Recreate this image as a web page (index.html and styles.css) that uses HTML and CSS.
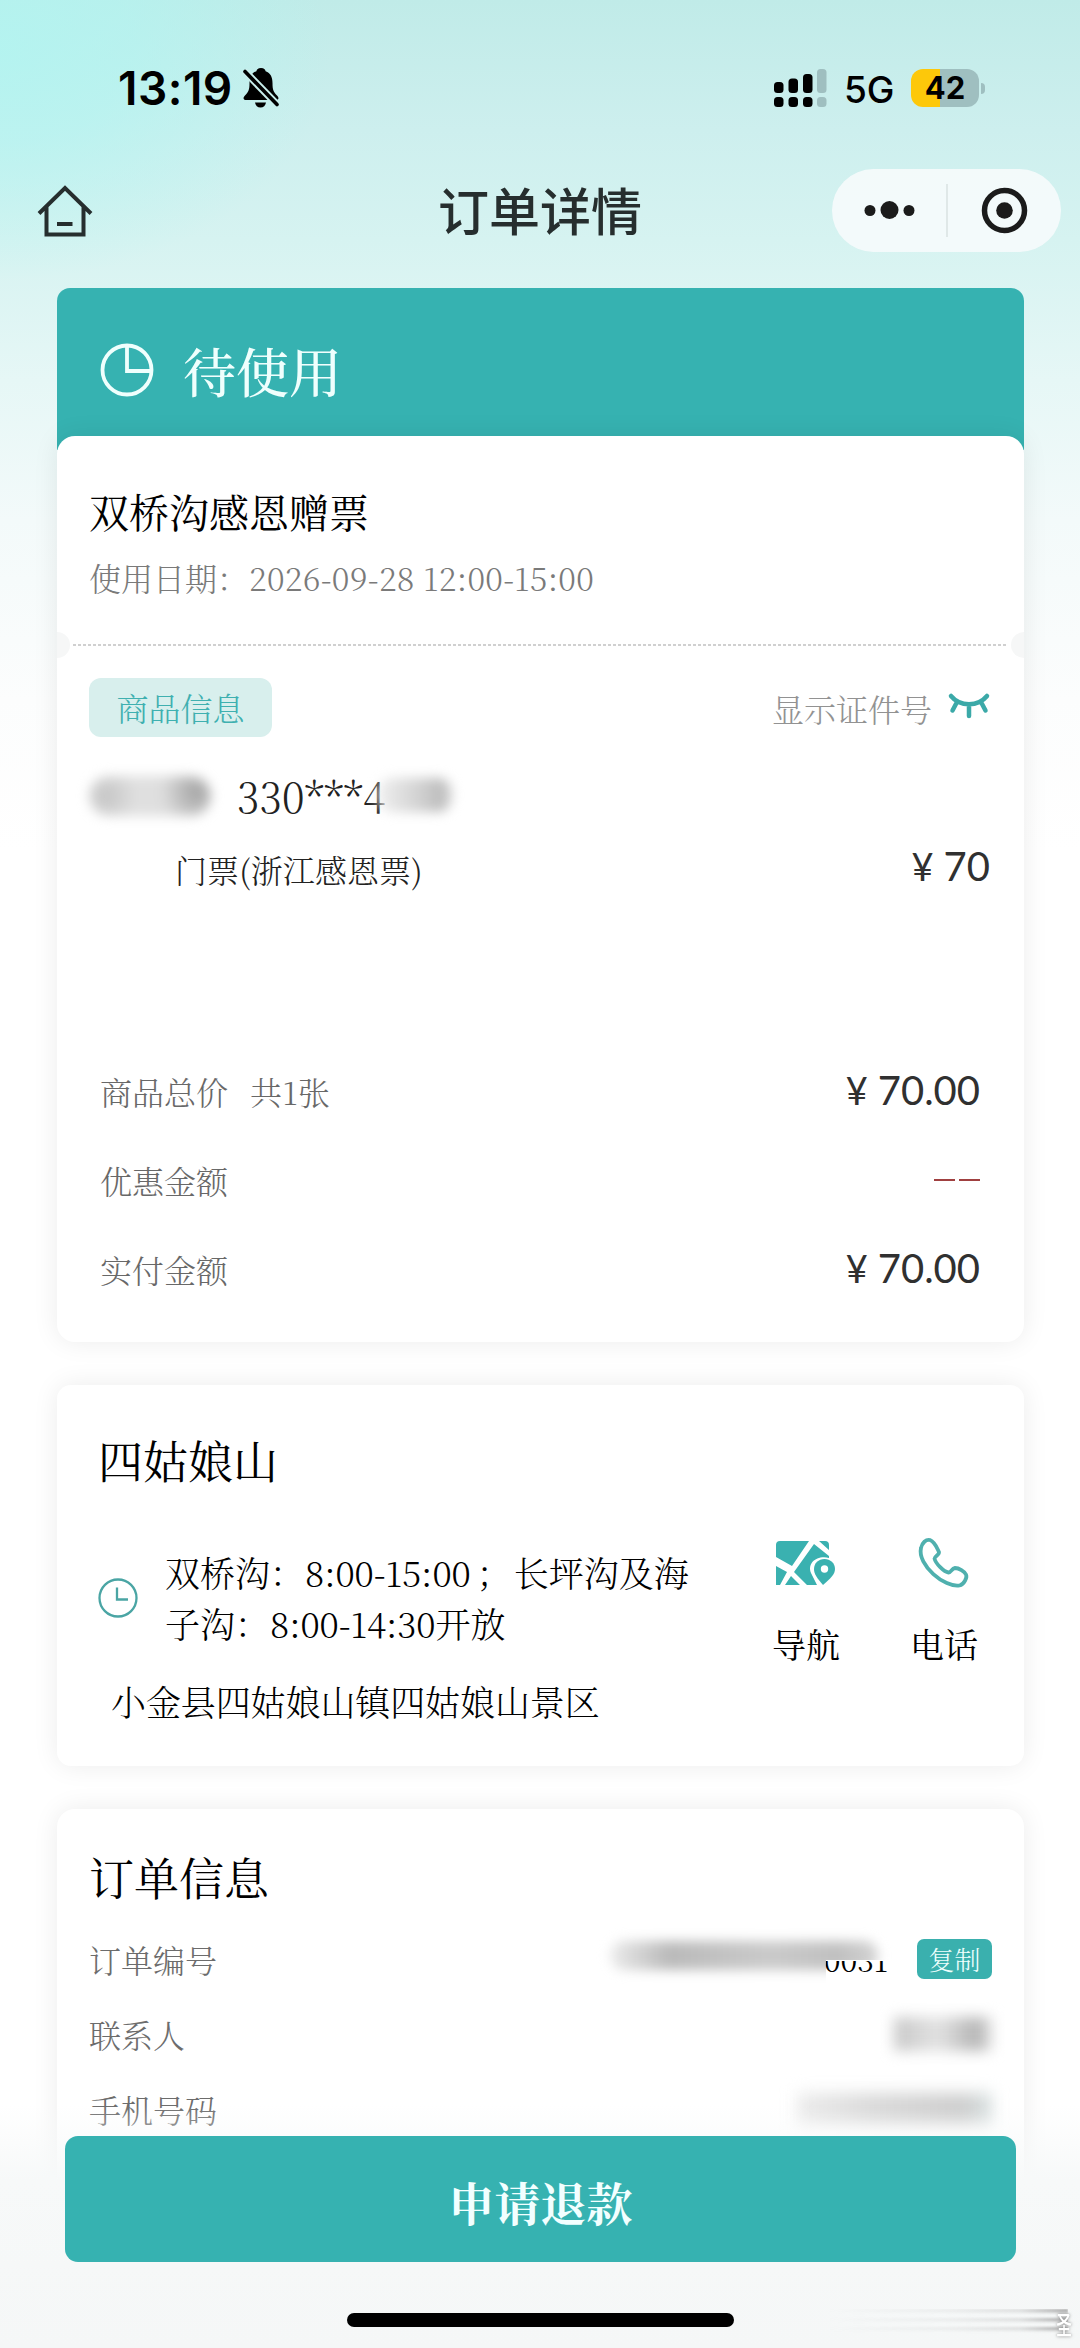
FILE: index.html
```html
<!DOCTYPE html>
<html lang="zh-CN">
<head>
<meta charset="utf-8">
<title>订单详情</title>
<link rel="stylesheet" href="styles.css">
</head>
<body>
<div class="page">
  <header class="status">
    <div class="status-left">
      <span class="time">13:19</span>
      <svg class="bell" width="36" height="40" viewBox="0 0 36 40">
        <path d="M18 0c-3 0-4.300 1.500-4.600 3.200C8.500 5 6.500 9 6.500 15c0 7-1 9-4.500 12.500-2.500 2.500-1.500 4.500 1 4.500h30c2.500 0 3.500-2 1-4.500C30.500 24 29.500 22 29.500 15c0-6-2-10-6.900-11.800C22.300 1.500 21 0 18 0zM12 34.500h11c-.5 3-2.500 5-5.500 5s-5-2-5.500-5z" fill="#000"/>
        <path d="M1 2.500L35 37.500" stroke="#c8eeec" stroke-width="7.500"/>
        <path d="M2 3.500L34 36.500" stroke="#000" stroke-width="3.600" stroke-linecap="round"/>
      </svg>
    </div>
    <div class="status-right">
      <svg class="signal" width="53" height="39" viewBox="0 0 53 39">
        <g fill="#000"><rect x="0" y="13" width="9.500" height="11" rx="3.500"/><rect x="14.500" y="9.500" width="9.500" height="14.500" rx="3.500"/><rect x="29" y="5" width="9.500" height="19" rx="3.500"/><rect x="0" y="28" width="9.500" height="10" rx="3.500"/><rect x="14.500" y="28" width="9.500" height="10" rx="3.500"/><rect x="29" y="28" width="9.500" height="10" rx="3.500"/></g>
        <g fill="#9fbfc0"><rect x="43" y="0" width="9.500" height="24" rx="3.500"/><rect x="43" y="28" width="9.500" height="10" rx="3.500"/></g>
      </svg>
      <span class="net">5G</span>
      <span class="battery">42</span><span class="battery-tip"></span>
    </div>
  </header>

  <nav class="nav">
    <svg class="home" width="56" height="56" viewBox="0 0 56 56" fill="none" stroke="#262e2e" stroke-width="4">
      <path d="M2 29.500L28 4l26 25.500M9.500 23v27.500h37V23M20 40h15.500"/>
    </svg>
    <h1 class="nav-title">订单详情</h1>
    <div class="capsule">
      <svg width="229" height="83" viewBox="0 0 229 83">
        <g fill="#1b1b1b"><circle cx="38" cy="41.500" r="5.500"/><circle cx="57.500" cy="41" r="9"/><circle cx="77" cy="41.500" r="5.500"/><circle cx="172.500" cy="41.500" r="8.300"/></g>
        <path d="M115 15v53" stroke="#d3dcdc" stroke-width="1.200"/>
        <circle cx="172.500" cy="41.500" r="20" fill="none" stroke="#1b1b1b" stroke-width="5.500"/>
      </svg>
    </div>
  </nav>

  <main class="content">
    <section class="order">
      <div class="state">
        <svg width="54" height="54" viewBox="0 0 54 54" fill="none" stroke="#effffd" stroke-width="3.800"><circle cx="27" cy="27" r="24.500"/><path d="M27 3v25h24"/></svg>
        <span>待使用</span>
      </div>
      <div class="card order-card">
        <div class="order-head">
          <h2 class="ticket-name">双桥沟感恩赠票</h2>
          <p class="use-date">使用日期：<span class="date-digits">2026-09-28 12:00-15:00</span></p>
        </div>
        <div class="tear"></div>
        <div class="goods">
          <div class="goods-top">
            <span class="tag">商品信息</span>
            <span class="show-id"><span>显示证件号</span>
              <svg width="42" height="28" viewBox="0 0 42 28" fill="none" stroke="#3ba9a8" stroke-width="4.500" stroke-linecap="round"><path d="M3 3c9 11 27 11 36 0M9 9L4.500 17.500M21 12v11M33 9l4.500 8.500"/></svg>
            </span>
          </div>
          <div class="person">
            <span class="smudge smudge-name"></span>
            <span class="id-no">330<span class="stars">***</span>4</span>
            <span class="smudge smudge-id"></span>
          </div>
          <div class="item"><span>门票(浙江感恩票)</span><span class="price"><i>¥</i>70</span></div>
          <div class="sums">
            <div class="sum"><span>商品总价<span class="count">共1张</span></span><span class="price"><i>¥</i>70.00</span></div>
            <div class="sum"><span>优惠金额</span><span class="none"><b></b><b></b></span></div>
            <div class="sum"><span>实付金额</span><span class="price"><i>¥</i>70.00</span></div>
          </div>
        </div>
      </div>
    </section>

    <section class="card place">
      <h2 class="heading">四姑娘山</h2>
      <div class="place-body">
        <div class="place-info">
          <div class="hours">
            <svg width="42" height="42" viewBox="0 0 42 42" fill="none" stroke="#4aa5a4" stroke-width="2.300"><circle cx="21" cy="21" r="18.500"/><path d="M20 10.500v12h11"/></svg>
            <p>双桥沟：<span class="hd">8:00-15:00</span><span class="semi">；</span>长坪沟及海<br>子沟：<span class="hd">8:00-14:30</span>开放</p>
          </div>
          <p class="address">小金县四姑娘山镇四姑娘山景区</p>
        </div>
        <div class="actions">
          <div class="action">
            <svg width="60" height="48" viewBox="0 0 60 48">
              <path d="M4 2h29L16 27 0 18V6q0-4 4-4zM0 27l11 6L4 46H0zM18 33L38 5l15 12v2c-12-3-22 5-18 15l6 12H31zM15 37l9 9H9zM43 2h6q4 0 4 4v5z" fill="#3ab1b0"/>
              <path d="M48.500 20c-6 0-10.500 4.300-10.500 10 0 5 3 9 9 16 8-7 12-11 12-16 0-5.700-4.700-10-10.500-10z" fill="#3ab1b0"/><circle cx="48.500" cy="30" r="3.700" fill="#fff"/>
            </svg>
            <span>导航</span>
          </div>
          <div class="action">
            <svg width="50" height="50" viewBox="0 0 50 50" fill="none" stroke="#4fb0ae" stroke-width="3.800" stroke-linejoin="round">
              <path d="M2 10C3 5 7 1 11 2c5 2 7 8 9 12 .500 3-4.500 4-4.500 6.500 1 5 9.500 13.500 14 14 3 0 3-4 6.500-4.500 4 0 9.500 3.500 11 6.500 1.500 3-2 10-6.500 11C26 50-2 27 2 10z"/>
            </svg>
            <span>电话</span>
          </div>
        </div>
      </div>
    </section>

    <section class="card info">
      <h2 class="heading">订单信息</h2>
      <div class="row"><span>订单编号</span>
        <span class="order-no"><span class="digits">0031</span><span class="smudge-cover"></span><span class="smudge smudge-no"></span></span>
        <span class="copy">复制</span>
      </div>
      <div class="row"><span>联系人</span><span class="smudge smudge-contact"></span></div>
      <div class="row"><span>手机号码</span><span class="smudge smudge-phone"></span></div>
    </section>
  </main>

  <footer class="bottom">
    <div class="refund">申请退款</div>
    <div class="indicator"></div>
    <span class="streaks"></span>
    <span class="mark">圣</span>
  </footer>
</div>
</body>
</html>
```
FILE: styles.css
```css
* { box-sizing: border-box; margin: 0; padding: 0; }
body { width: 1080px; height: 2348px; overflow: hidden; }
svg { display: block; flex: none; overflow: visible; }
i { font-style: normal; }
h1, h2 { font-weight: 400; }

.page {
  position: relative;
  width: 1080px;
  height: 2348px;
  overflow: hidden;
  font-family: "Noto Serif CJK SC", "Noto Serif SC", "Noto Sans CJK SC", serif;
  font-weight: 300;
  line-height: 50px;
  color: #111;
  background:
    radial-gradient(ellipse 330px 230px at 0 50px, rgba(176, 245, 241, .8) 0, rgba(176, 245, 241, .6) 40%, rgba(176, 245, 241, 0) 100%),
    linear-gradient(180deg, #c0ebe8 0, #cdefee 130px, #d6f3f1 240px, #e6f7f6 380px, #f3fafa 520px, #fcfdfd 700px, #fff 850px);
}

/* status bar */
.status { height: 150px; padding: 0 95px 0 118px; display: flex; justify-content: space-between; }
.status-left, .status-right { display: flex; align-items: center; height: 176px; }
.time { font: 600 46px/60px Inter, sans-serif; letter-spacing: .5px; color: #000; width: 125px; white-space: nowrap; }
.signal { margin-right: 18px; }
.net { margin-left: -1px; font: 500 37px/50px Inter, sans-serif; color: #000; width: 67px; position: relative; top: 2px; }
.battery {
  width: 68px; height: 38px; border-radius: 12px;
  background: linear-gradient(90deg, #fdc80a 43%, #9fbfc0 43%);
  font: 700 31px/38px Inter, sans-serif; color: #000; text-align: center;
}
.battery-tip { width: 4px; height: 11px; margin-left: 2px; border-radius: 0 4px 4px 0; background: #9fbfc0; }

/* title bar */
.nav { height: 138px; padding: 19px 19px 0 37px; display: grid; grid-template-columns: 229px 1fr 229px; align-items: start; }
.home { margin-top: 15px; }
.nav-title { padding-right: 18px; text-align: center; font: 500 51px/80px "Noto Sans CJK SC", sans-serif; color: #262e2e; }
.capsule { width: 229px; height: 83px; border-radius: 42px; background: rgba(247, 251, 252, .88); }

/* cards */
.content { padding: 0 56px 0 57px; display: flex; flex-direction: column; gap: 43px; }
.card { background: #fff; border-radius: 14px; box-shadow: 0 0 26px rgba(0, 0, 0, .08); }
.heading { font-size: 45px; line-height: 60px; color: #000; }

.order { border-radius: 13px; background: linear-gradient(#36b2b1, #36b2b1) no-repeat 0 0 / 100% 162px; }
.state { height: 148px; padding: 15px 0 0 43px; display: flex; align-items: center; gap: 29px; font-size: 53px; line-height: 60px; color: #effffd; font-weight: 500; }
.order-card { height: 906px; border-radius: 18px; }
.order-head { height: 208px; padding: 45px 33px 0 32px; }
.ticket-name { font-size: 40px; line-height: 60px; color: #000; }
.use-date { margin-top: 16px; font-size: 32px; line-height: 40px; color: #7a7a7a; white-space: nowrap; }
.date-digits { letter-spacing: .3px; }
.tear {
  height: 2px; margin: 0 16px; position: relative;
  background: repeating-linear-gradient(90deg, #d0d0d0 0 3px, transparent 3px 5px);
}
.tear::before, .tear::after { content: ""; position: absolute; top: -12px; width: 13px; height: 26px; background: #f6f7f7; }
.tear::before { left: -16px; border-radius: 0 13px 13px 0; }
.tear::after { right: -16px; border-radius: 13px 0 0 13px; }

.goods { padding: 32px 34px 0 32px; }
.goods-top { display: flex; justify-content: space-between; height: 59px; }
.tag { width: 183px; border-radius: 12px; background: #d8efed; color: #3fb0b0; font-size: 32px; line-height: 59px; text-align: center; }
.show-id { display: flex; align-items: center; gap: 16px; font-size: 32px; color: #929292; }
.show-id svg { margin-top: -2px; }
.person { height: 60px; margin-top: 29px; display: flex; align-items: center; }
.id-no { margin-left: 26px; font-size: 41px; line-height: 60px; color: #222; white-space: nowrap; }
.smudge { display: block; flex: none; filter: blur(6px); }
.smudge-name { width: 122px; height: 40px; background: radial-gradient(circle at 88% 40%, #a4a4a4 0, transparent 32%), radial-gradient(circle at 14% 50%, #c4c4c4 0, transparent 30%), linear-gradient(90deg, #e4e4e4, #dadada); border-radius: 20px; }
.smudge-id { width: 74px; height: 34px; margin: -2px 0 0 -8px; border-radius: 14px; background: linear-gradient(90deg, #f0f0f0, #cfcfcf 60%, #bcbcbc 85%, #d8d8d8); }
.item { margin-top: 18px; padding-left: 86px; height: 50px; display: flex; justify-content: space-between; align-items: center; font-size: 32px; line-height: 46px; color: #222; letter-spacing: .1px; }
.price { font: 400 40px/50px Lato, "Open Sans", sans-serif; color: #303030; white-space: nowrap; letter-spacing: 0; position: relative; top: -3px; }
.price i { display: inline-block; width: 32px; font-size: 38px; }
.sums { margin: 152px 10px 0 11px; color: #686868; }
.sum { height: 89px; display: flex; justify-content: space-between; align-items: center; font-size: 32px; }
.sum .price { top: -1px; }
.count { margin-left: 22px; letter-spacing: .5px; }
.none { display: flex; gap: 4px; }
.none b { width: 21px; height: 2px; background: #a04040; }

/* scenic spot */
.place { height: 381px; padding: 45px 41px 0; }
.place-body { display: flex; justify-content: space-between; }
.hours { margin-top: 57px; display: flex; align-items: center; gap: 26px; font-size: 35px; line-height: 51px; color: #000; white-space: nowrap; }
.hours svg { margin-left: -1px; }
.hd { letter-spacing: -.1px; }
.semi { margin: 0 2px 0 6px; }
.address { margin: 32px 0 0 13px; font-size: 35px; line-height: 40px; letter-spacing: -.1px; color: #000; white-space: nowrap; }
.actions { display: flex; gap: 70px; padding-top: 48px; margin-right: 5px; }
.action { width: 68px; display: flex; flex-direction: column; align-items: center; gap: 34px; font-size: 34px; line-height: 44px; font-weight: 400; color: #000; }
.action svg { height: 50px; }

/* order info */
.info { height: 520px; padding: 38px 32px 0 32px; border-radius: 18px; }
.info .heading { margin-bottom: 14px; }
.row { height: 75px; display: flex; align-items: center; font-size: 32px; color: #6c6c6c; }
.row > :first-child { margin-right: auto; }
.order-no { position: relative; width: 280px; margin-right: 29px; text-align: right; color: #000; }
.digits { font-size: 30px; font-weight: 400; }
.smudge-cover { position: absolute; right: 0; top: 4px; width: 70px; height: 24px; background: #fff; }
.smudge-no { position: absolute; right: 10px; top: 8px; width: 268px; height: 29px; border-radius: 14px; background: linear-gradient(90deg, #ececec, #bababa 22%, #cacaca 60%, #c0c0c0 85%, #d4d4d4); clip-path: polygon(-20px -20px, 290px -20px, 290px 19px, 216px 19px, 216px 50px, -20px 50px); }
.copy { width: 75px; height: 40px; border-radius: 7px; background: #3ab0ae; color: #effffd; font-size: 26px; line-height: 40px; text-align: center; }
.smudge-contact { width: 98px; height: 34px; filter: blur(7px); background: linear-gradient(90deg, #c8c8c8, #e2e2e2 45%, #b4b4b4 85%, #e2e2e2); }
.smudge-phone { width: 195px; height: 32px; filter: blur(8px); background: linear-gradient(90deg, #ececec, #d9d9d9 40%, #cdcdcd 85%, #d8e2e2); }

/* bottom action bar */
.bottom {
  position: absolute; left: 0; bottom: 0; width: 1080px; height: 243px; padding: 31px 64px 0 65px;
  background: linear-gradient(180deg, rgba(246, 248, 248, 0), #f7f9f9 75px, #f5f7f7);
}
.refund { height: 126px; border-radius: 13px; background: #36b2b1; color: #f2ffff; font-size: 46px; font-weight: 700; line-height: 130px; text-align: center; }
.indicator { width: 387px; height: 14px; margin: 51px auto 0 282px; border-radius: 7px; background: #000; }
.streaks {
  position: absolute; right: 12px; bottom: 13px; width: 240px; height: 26px; filter: blur(1px);
  background: repeating-linear-gradient(180deg, #a8a8a8 0 2px, transparent 5px 9px);
  -webkit-mask-image: linear-gradient(90deg, transparent, rgba(0, 0, 0, .12) 50%, rgba(0, 0, 0, .3) 80%, #000);
  mask-image: linear-gradient(90deg, transparent, rgba(0, 0, 0, .12) 50%, rgba(0, 0, 0, .3) 80%, #000);
}
.mark { position: absolute; right: 3px; bottom: 10px; font-family: "Noto Sans CJK SC", sans-serif; font-size: 26px; line-height: 28px; font-weight: 500; color: #fff; text-shadow: 0 0 4px #777; transform: scaleX(.6); }
```
